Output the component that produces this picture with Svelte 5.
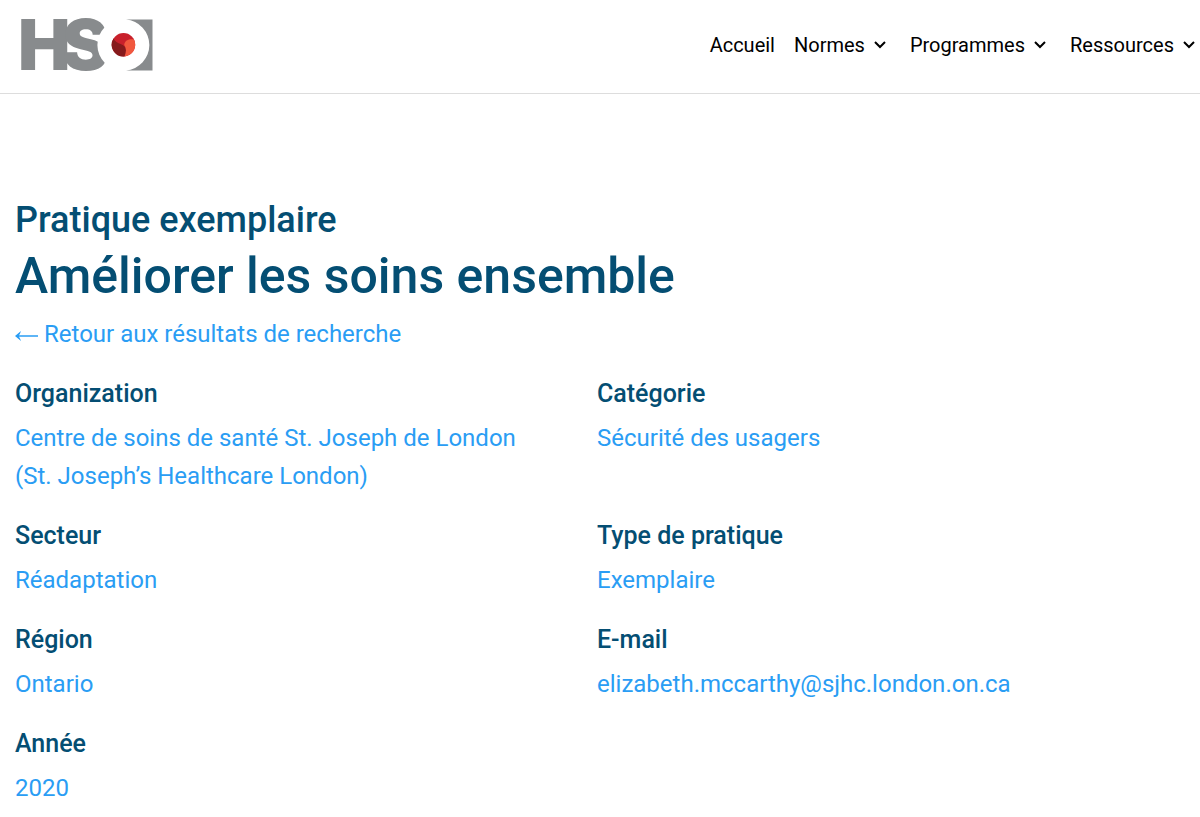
<script lang="ts">
	const menu: {label: string, sub: boolean}[] = [
		{label: "Accueil", sub: false},
		{label: "Normes", sub: true},
		{label: "Programmes", sub: true},
		{label: "Ressources", sub: true}
	]

	const details: {title: string, value: string}[] = [
		{title: "Organization", value: "Centre de soins de santé St. Joseph de London (St. Joseph’s Healthcare London)"},
		{title: "Catégorie", value: "Sécurité des usagers"},
		{title: "Secteur", value: "Réadaptation"},
		{title: "Type de pratique", value: "Exemplaire"},
		{title: "Région", value: "Ontario"},
		{title: "E-mail", value: "elizabeth.mccarthy@sjhc.london.on.ca"},
		{title: "Année", value: "2020"}
	]
</script>

<header>
	<a class="logo" href="/" aria-label="HSO">
		<svg width="132" height="54" viewBox="0 0 132 54">
			<text class="letters" x="-3" y="52">H<tspan x="41">S</tspan></text>
			<circle cx="102" cy="27" r="25.6" fill="#fff" />
			<path d="M105 1.5H131.5V52.5H105A25.6 25.6 0 0 0 105 1.5Z" fill="#888b8d" />
			<circle cx="102.5" cy="26.7" r="11.7" fill="#c8202b" />
			<path d="M92.5 20.5C95 27 105 25 105 32C105 35 104.5 37 103.5 38.4A11.7 11.7 0 0 1 92.5 20.5Z" fill="#861a1c" />
			<path d="M113 21.5C107 20.5 103.5 23 103.2 27C105.5 30 105.5 34 103.5 38.4A11.7 11.7 0 0 0 113 21.5Z" fill="#f1583e" />
		</svg>
	</a>
	<nav>
		{#each menu as item}
			<a href="/">
				{item.label}
				{#if item.sub}
					<svg width="12" height="8" viewBox="0 0 12 8" aria-hidden="true">
						<path d="M1 1L6 6L11 1" fill="none" stroke="currentColor" stroke-width="2" />
					</svg>
				{/if}
			</a>
		{/each}
	</nav>
</header>

<main>
	<h2>Pratique exemplaire</h2>
	<h1>Améliorer les soins ensemble</h1>
	<a class="back" href="/">
		<svg width="23" height="12" viewBox="0 0 23 12" aria-hidden="true">
			<path d="M0 6L6 1Q5 4 4 5.3H23V6.7H4Q5 8 6 11Z" fill="currentColor" />
		</svg>
		Retour aux résultats de recherche
	</a>
	<dl>
		{#each details as item}
			<div>
				<dt>{item.title}</dt>
				<dd>{item.value}</dd>
			</div>
		{/each}
	</dl>
</main>

<style>
	:global(body) {
		background: #fff;
		font-family: Roboto, sans-serif;
		overflow-x: hidden;
	}

	header {
		display: flex;
		justify-content: space-between;
		align-items: flex-start;
		padding: 18px 5px 21px 21px;
		border-bottom: 1px solid #ddd;
	}

	.logo svg {
		display: block;
		overflow: visible;
	}

	.letters {
		font-family: Inter, sans-serif;
		font-size: 70px;
		font-weight: 900;
		fill: #888b8d;
	}

	nav {
		display: flex;
		gap: 24px;
		padding: 13px 0;
	}

	nav a {
		display: flex;
		align-items: center;
		gap: 9px;
		color: #000;
		font-size: 20px;
		line-height: 28px;
		text-decoration: none;
	}

	nav a:first-child {
		margin-right: -5px;
	}

	main {
		padding: 104px 15px 12px;
		color: #044e73;
	}

	h1, h2 {
		margin: 0;
		font-weight: 500;
	}

	h2 {
		font-size: 36px;
		line-height: 44px;
	}

	h1 {
		font-size: 50px;
		line-height: 68px;
	}

	.back {
		display: flex;
		align-items: center;
		gap: 6px;
		margin-top: 5px;
		color: #2a9df4;
		font-size: 24px;
		line-height: 38px;
		text-decoration: none;
	}

	.back svg {
		margin-top: 4px;
	}

	dl {
		display: grid;
		grid-template-columns: 1fr 1fr;
		column-gap: 64px;
		row-gap: 27px;
		margin: 27px 0 0;
		padding-right: 70px;
	}

	dt {
		font-size: 25px;
		font-weight: 500;
		line-height: 28px;
	}

	dd {
		margin: 11px 0 0;
		color: #2a9df4;
		font-size: 24px;
		line-height: 38px;
	}
</style>
